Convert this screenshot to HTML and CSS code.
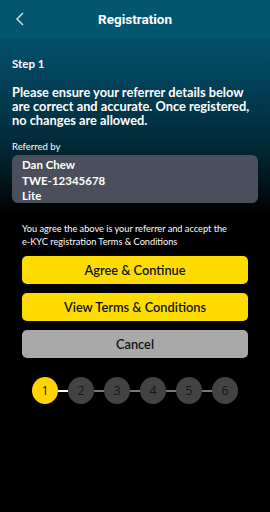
FILE: index.html
```html
<!DOCTYPE html>
<html lang="en">
<head>
    <meta charset="UTF-8">
    <meta name="viewport" content="width=device-width, initial-scale=1.0">
    <title>Registration</title>
    <link rel="stylesheet" href="styles.css">
</head>
<body>
    <div class="screen">
        <div class="header">
            <button class="back-button" aria-label="Back">
                <svg width="10" height="14" viewBox="0 0 10 14" fill="none" stroke="currentColor" stroke-width="1.4">
                    <polyline points="8,1 2,7 8,13"></polyline>
                </svg>
            </button>
            <h1>Registration</h1>
        </div>

        <div class="content">
            <h2 class="step-title">Step 1</h2>
            <p class="intro">Please ensure your referrer details below are correct and accurate. Once registered, no changes are allowed.</p>

            <div class="field-label">Referred by</div>
            <div class="referrer-box">
                <div>Dan Chew</div>
                <div>TWE-12345678</div>
                <div>Lite</div>
            </div>

            <p class="agree-text">You agree the above is your referrer and accept the <span class="nowrap">e-KYC</span> registration Terms &amp; Conditions</p>

            <div class="actions">
                <button class="btn btn-primary">Agree &amp; Continue</button>
                <button class="btn btn-primary">View Terms &amp; Conditions</button>
                <button class="btn btn-cancel">Cancel</button>
            </div>

            <div class="stepper">
                <div class="step active">1</div>
                <div class="step-line done"></div>
                <div class="step">2</div>
                <div class="step-line"></div>
                <div class="step">3</div>
                <div class="step-line"></div>
                <div class="step">4</div>
                <div class="step-line"></div>
                <div class="step">5</div>
                <div class="step-line"></div>
                <div class="step">6</div>
            </div>
        </div>
    </div>
</body>
</html>
```

FILE: styles.css
```css
* {
    margin: 0;
    padding: 0;
    box-sizing: border-box;
}

body {
    font-family: 'Lato', 'Open Sans', sans-serif;
    background-color: #000;
    color: white;
    width: 270px;
    height: 512px;
    overflow: hidden;
}

.screen {
    min-height: 512px;
    background: linear-gradient(to bottom, #045774 0px, #03506b 38px, #03425a 80px, #012733 150px, #000 215px, #000 100%);
}

.header {
    height: 38px;
    display: flex;
    align-items: center;
    justify-content: center;
    position: relative;
    background-color: #04566f;
}

.header h1 {
    font-family: 'Roboto', sans-serif;
    font-size: 13.5px;
    font-weight: 700;
}

.back-button {
    position: absolute;
    left: 15px;
    top: 12px;
    background: none;
    border: none;
    color: #dbe7ec;
    display: flex;
}

.content {
    padding: 19px 12px 0;
}

.step-title {
    font-size: 11.5px;
    font-weight: 700;
    line-height: 14px;
}

.intro {
    margin-top: 14px;
    font-size: 12.8px;
    font-weight: 700;
    line-height: 14px;
}

.field-label {
    margin-top: 14px;
    font-size: 9.5px;
    line-height: 12px;
}

.referrer-box {
    margin-top: 2px;
    background-color: #4a4f5b;
    border-radius: 6px;
    padding: 2px 10px 0;
    height: 48px;
    font-size: 11.5px;
    font-weight: 700;
    line-height: 15.5px;
}

.agree-text {
    margin: 19px 10px 0;
    font-size: 9.2px;
    line-height: 13px;
}

.nowrap {
    white-space: nowrap;
}

.actions {
    margin: 8px 10px 0;
    display: flex;
    flex-direction: column;
    gap: 9px;
}

.btn {
    height: 28px;
    border: none;
    border-radius: 5px;
    font-family: 'Lato', sans-serif;
    font-size: 12.8px;
    font-weight: 600;
    color: #111;
}

.btn-primary {
    background-color: #ffdc00;
}

.btn-cancel {
    background-color: #a9a9a9;
}

.stepper {
    margin-top: 19px;
    display: flex;
    align-items: center;
    justify-content: center;
}

.step {
    width: 26px;
    height: 27px;
    border-radius: 50%;
    background-color: #434343;
    color: #141414;
    font-family: 'Open Sans', sans-serif;
    font-size: 12.5px;
    font-weight: 400;
    display: flex;
    align-items: center;
    justify-content: center;
}

.step.active {
    background-color: #ffd400;
}

.step-line {
    width: 10px;
    height: 2px;
    background-color: #777;
}

.step-line.done {
    background-color: #fff;
}
```
